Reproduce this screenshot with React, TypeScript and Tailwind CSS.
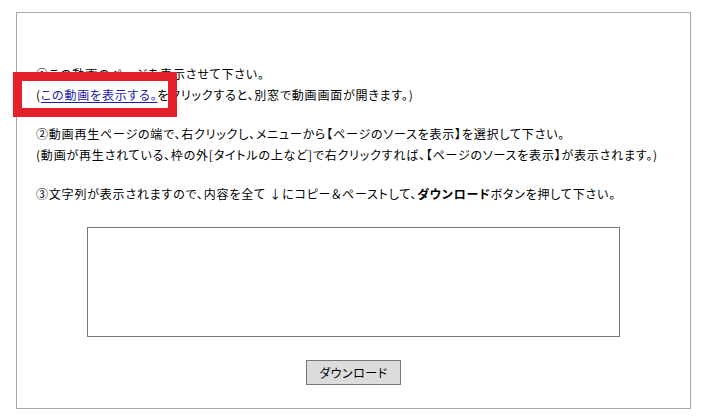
export default function App() {
  const font = "font-['Noto_Sans_CJK_JP','Noto_Sans',sans-serif] [font-feature-settings:'palt']";

  return (
    <div className={`relative min-h-[420px] w-[707px] bg-white pl-[16px] pt-[12px] text-black ${font}`}>
      <div className="flex h-[397px] w-[675px] flex-col border border-[#a9a9a9] px-[19px] pt-[50px] text-[12px] leading-[21px] tracking-[0.8px]">
        <div>
          <p>①この動画のページを表示させて下さい。</p>
          <p>
            (<a href="#" className="text-[#1a1aa6] underline underline-offset-2">この動画を表示する。</a>
            をクリックすると、別窓で動画画面が開きます。)
          </p>
        </div>
        <div className="mt-[18px]">
          <p>②動画再生ページの端で、右クリックし、メニューから【ページのソースを表示】を選択して下さい。</p>
          <p>(動画が再生されている、枠の外[タイトルの上など]で右クリックすれば、【ページのソースを表示】が表示されます。)</p>
        </div>
        <div className="mt-[18px]">
          <p>
            ③文字列が表示されますので、内容を全て ↓にコピー＆ペーストして、<b className="font-bold">ダウンロード</b>ボタンを押して下さい。
          </p>
        </div>
        <div className="mt-[23px] flex flex-col items-center">
          <textarea className="h-[110px] w-[533px] resize-none border border-[#777] bg-white outline-none" />
          <button className="mt-[23px] h-[25px] w-[95px] border border-[#777] bg-[#dcdcdc] text-[12px] tracking-[0.5px] text-black">
            ダウンロード
          </button>
        </div>
      </div>
      <div className="absolute left-[13px] top-[72px] h-[45px] w-[164px] border-[9px] border-[#e5202a]" />
    </div>
  );
}
